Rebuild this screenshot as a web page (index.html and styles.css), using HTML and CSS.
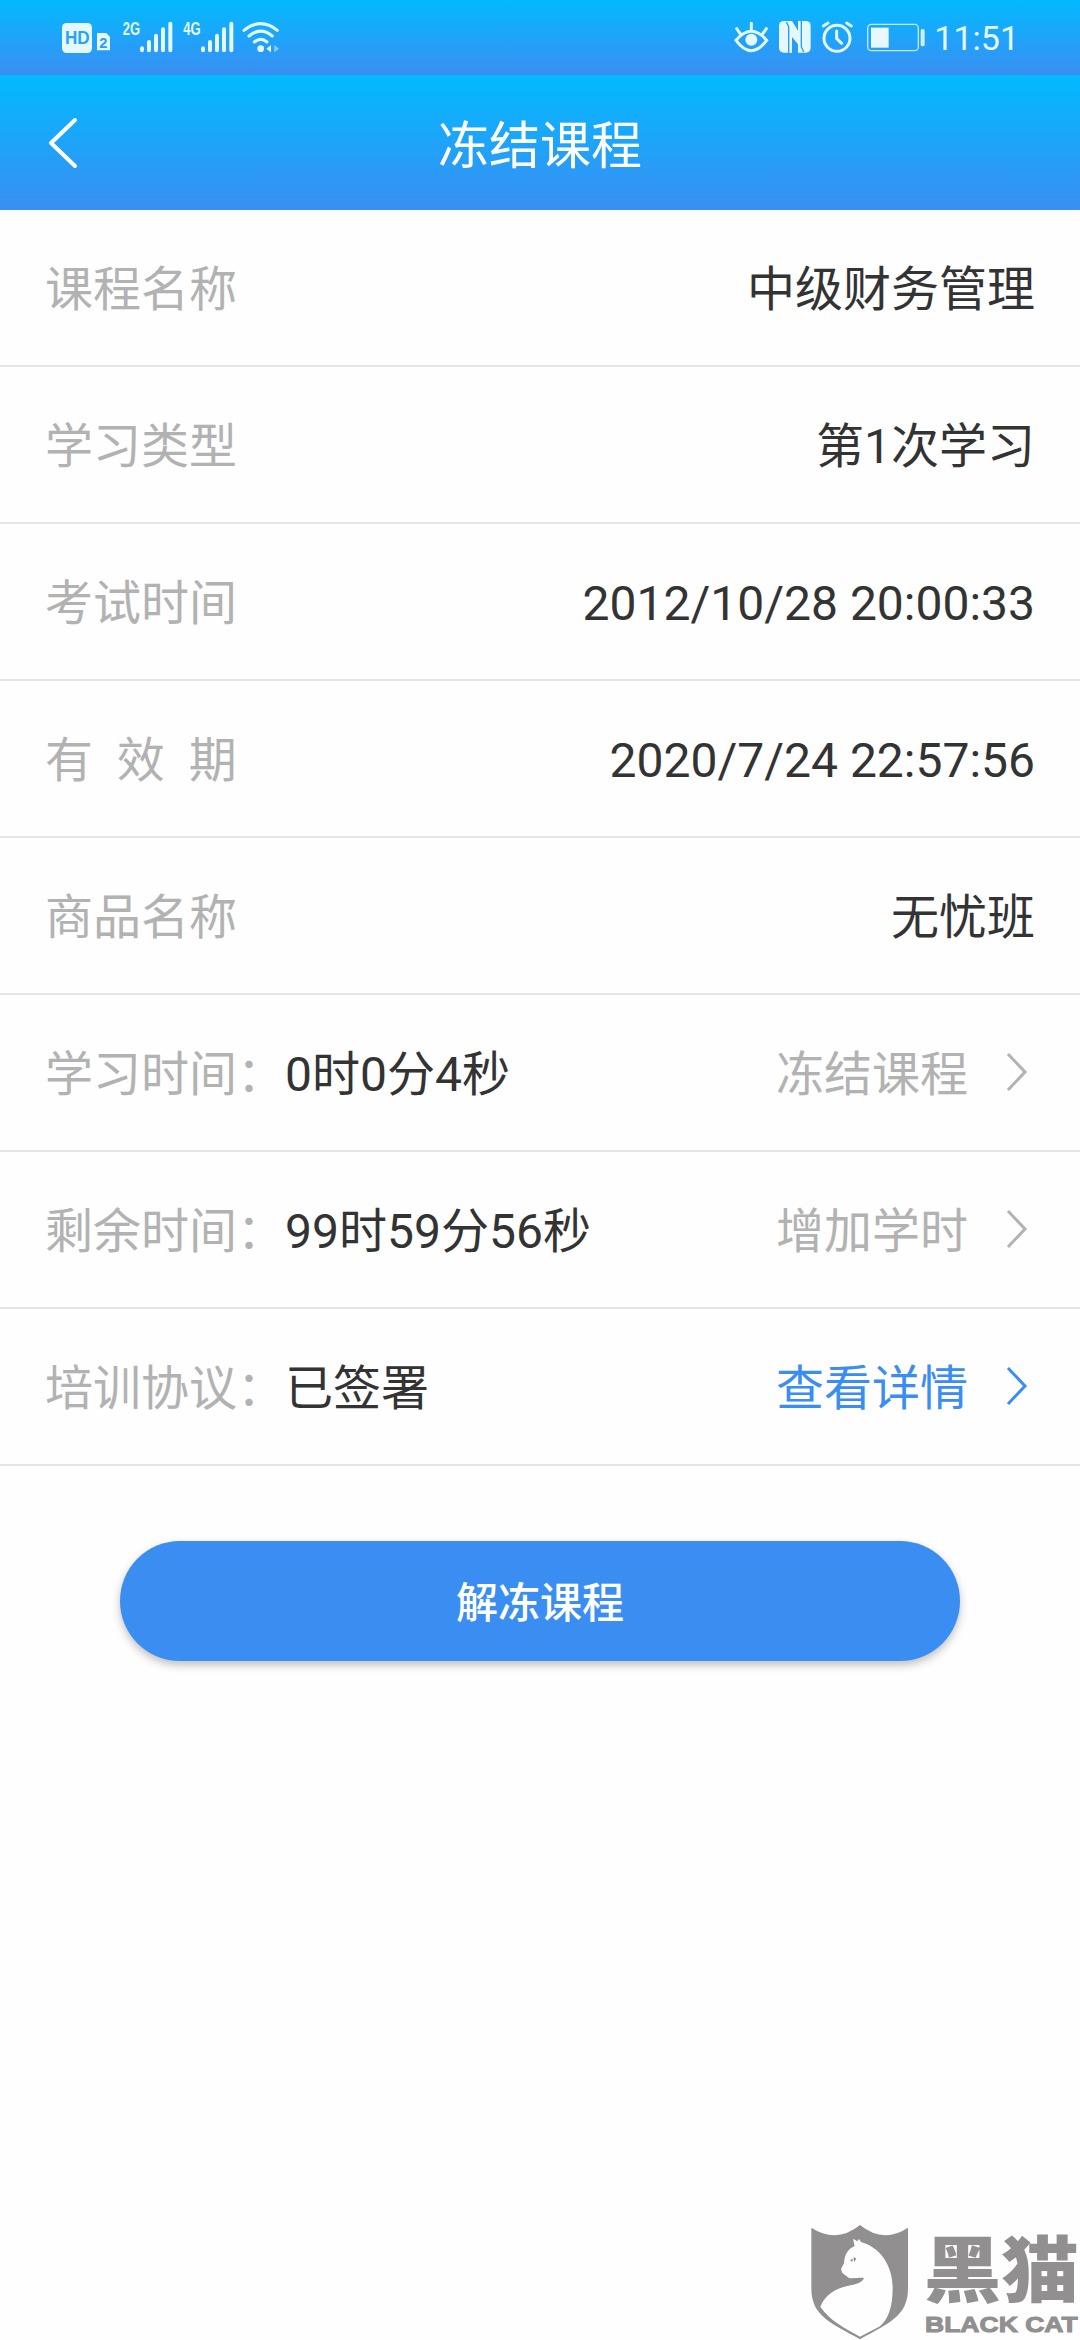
FILE: index.html
```html
<!DOCTYPE html>
<html lang="zh-CN">

<head>
  <meta charset="UTF-8" />
  <title>冻结课程</title>
  <meta name="viewport" content="width=device-width, initial-scale=1.0">
  <link rel="stylesheet" href="styles.css">
</head>

<body>
  <!-- 状态栏 -->
  <div class="status-bar">
    <div class="status-left">
      <svg class="icon" width="50" height="31" viewBox="66 66 150 93">
        <rect x="66" y="69" width="90" height="90" rx="14" fill="#e4f8ff" />
        <text class="hd" x="75" y="133" textLength="74" lengthAdjust="spacingAndGlyphs">HD</text>
        <path d="M171 99h28l11 12v40h-39z" fill="#e4f8ff" />
        <text class="sim" x="178" y="144">2</text>
      </svg>
      <svg class="icon" width="51" height="31" viewBox="246 66 153 93">
        <text class="net" x="248" y="106" textLength="52" lengthAdjust="spacingAndGlyphs">2G</text>
        <path class="bars" d="M306 145v6M327 126v25M348 107v44M369 88v63M391 71v80" />
      </svg>
      <svg class="icon" width="51" height="31" viewBox="429 66 153 93">
        <text class="net" x="430" y="106" textLength="52" lengthAdjust="spacingAndGlyphs">4G</text>
        <path class="bars" d="M489 145v6M510 126v25M531 107v44M552 88v63M574 71v80" />
      </svg>
      <svg class="icon" width="36" height="31" viewBox="612 66 108 93">
        <path class="wifi" d="M612 91q50 -40 100 0M627 108q35 -29 70 0M643 126q19 -16 38 0" />
        <circle cx="662" cy="146" r="10" fill="#e4f8ff" />
        <path d="M693 135v22l-14 -11z" fill="#e4f8ff" />
        <path d="M703 135v22l14 -11z" fill="#8fcbfb" />
      </svg>
    </div>
    <div class="status-right">
      <svg class="icon" width="33" height="31" viewBox="75 66 99 93">
        <path class="line" d="M78 121q46 -54 92 0q-46 62 -92 0zM124 70v18M80 86l10 14M169 86l-10 14" />
        <circle cx="124" cy="119" r="18" fill="#e4f8ff" />
      </svg>
      <svg class="icon" width="32" height="31" viewBox="207 66 96 93">
        <rect x="207" y="63" width="95" height="95" rx="14" fill="#e4f8ff" />
        <path d="M236 158V80L229 66M274 63V140L281 156" fill="none" stroke="#259df8" stroke-width="4" />
        <path d="M246 62h18v30zM264 159h-18v-48l18 22z" fill="#259df8" />
      </svg>
      <svg class="icon" width="32" height="31" viewBox="336 66 96 93">
        <circle class="line" cx="381" cy="115" r="39" />
        <path class="line" d="M380 93v23l15 14M340 78l14 -9M424 78l-14 -9" />
      </svg>
      <svg class="icon battery" width="58" height="31" viewBox="471 66 174 93">
        <rect x="473" y="73" width="152" height="79" rx="11" fill="none" stroke="#bfeaff" stroke-width="4" />
        <rect x="483" y="83" width="53" height="60" fill="#e9f7ff" />
        <rect x="632" y="87" width="12" height="52" rx="5" fill="#cfefff" />
      </svg>
      <span class="clock">11:51</span>
    </div>
  </div>

  <!-- 标题栏 -->
  <header class="header">
    <svg class="back" width="30" height="52" viewBox="0 0 30 52">
      <path d="M27 3L3 26L27 49" />
    </svg>
    <h1>冻结课程</h1>
  </header>

  <ul class="info-list">
    <li><span class="label">课程名称</span><span class="value right">中级财务管理</span></li>
    <li><span class="label">学习类型</span><span class="value right">第1次学习</span></li>
    <li><span class="label">考试时间</span><span class="value right">2012/10/28 20:00:33</span></li>
    <li><span class="label">有  效  期</span><span class="value right">2020/7/24 22:57:56</span></li>
    <li><span class="label">商品名称</span><span class="value right">无忧班</span></li>
    <li>
      <span class="label">学习时间：</span><span class="value">0时0分4秒</span>
      <a class="action">冻结课程<svg class="arrow" width="22" height="40" viewBox="0 0 22 40"><path d="M2 2L19 20L2 38" /></svg></a>
    </li>
    <li>
      <span class="label">剩余时间：</span><span class="value">99时59分56秒</span>
      <a class="action">增加学时<svg class="arrow" width="22" height="40" viewBox="0 0 22 40"><path d="M2 2L19 20L2 38" /></svg></a>
    </li>
    <li>
      <span class="label">培训协议：</span><span class="value">已签署</span>
      <a class="action active">查看详情<svg class="arrow" width="22" height="40" viewBox="0 0 22 40"><path d="M2 2L19 20L2 38" /></svg></a>
    </li>
  </ul>

  <button class="submit">解冻课程</button>

  <!-- 右下角水印 -->
  <svg class="watermark" width="300" height="140" viewBox="0 0 900 420">
    <path d="M94 83Q170 132 240 75Q310 132 384 83V265C384 350 325 370 240 418C155 370 94 350 94 265Z" />
    <path class="cat" d="M219 116L232 124L237 117L243 126C300 142 338 195 338 265C338 320 325 358 300 379L240 410C190 382 148 360 121 320C138 276 180 262 215 255C238 251 248 244 252 234C236 232 222 236 207 234L187 219L183 207L192 190C193 163 205 146 224 138Z" />
    <path d="M210 180l9 -4l-2 10zM220 172l9 3l-6 12z" />
    <text class="cn" x="431" y="287" textLength="466" lengthAdjust="spacingAndGlyphs">黑猫</text>
    <text class="en" x="435" y="396" textLength="458" lengthAdjust="spacingAndGlyphs">BLACK CAT</text>
  </svg>
</body>

</html>
```

FILE: styles.css
```css
body {
  margin: 0;
  min-height: 100vh;
  background: #fefefe;
  color: #333;
  font-family: Roboto, "Noto Sans CJK SC", sans-serif;
  font-size: 48px;
  overflow: hidden;
}

.status-bar {
  height: 75px;
  padding: 0 62px;
  box-sizing: border-box;
  display: flex;
  align-items: center;
  justify-content: space-between;
  background: linear-gradient(#02baff, #3a8ef2);
}

.status-left,
.status-right {
  display: flex;
  align-items: center;
  gap: 10px;
}

.status-right {
  gap: 11px;
}

.icon {
  overflow: visible;
}

.hd {
  font: bold 56px "Liberation Sans", sans-serif;
  fill: #27a3f6;
}

.sim {
  font: bold 44px "Liberation Sans", sans-serif;
  fill: #2b9bf6;
}

.net {
  font: bold 54px "Liberation Sans", sans-serif;
  fill: #e4f8ff;
}

.bars {
  fill: none;
  stroke: #e4f8ff;
  stroke-width: 12;
  stroke-linecap: round;
}

.wifi,
.line {
  fill: none;
  stroke: #e4f8ff;
  stroke-width: 9;
  stroke-linecap: round;
}

.battery {
  margin-left: 2px;
}

.clock {
  margin-right: -1px;
  margin-left: -2px;
  font-size: 34px;
  line-height: 40px;
  color: #e4f8ff;
}

.header {
  height: 135px;
  padding: 0 48px;
  box-sizing: border-box;
  display: flex;
  align-items: center;
  background: linear-gradient(#02baff, #3a8ef2);
}

.header h1 {
  flex: 1;
  margin: 0 30px 0 0;
  padding-bottom: 2px;
  font-size: 51px;
  font-weight: 400;
  color: #fff;
  text-align: center;
}

.back path {
  fill: none;
  stroke: #fff;
  stroke-width: 4;
  stroke-linecap: round;
  stroke-linejoin: round;
}

.info-list {
  list-style: none;
  margin: 0;
  padding: 0;
}

.info-list li {
  height: 157px;
  padding: 5px 45px 0;
  box-sizing: border-box;
  border-bottom: 2px solid #e5e5e5;
  display: flex;
  align-items: center;
  line-height: 70px;
}

.label {
  color: #b2b2b2;
  white-space: pre;
}

.right,
.action {
  margin-left: auto;
}

.action {
  display: flex;
  align-items: center;
  gap: 38px;
  margin-right: 7px;
  color: #b2b2b2;
}

.action.active {
  color: #3a8ef2;
}

.arrow {
  margin-top: -6px;
}

.arrow path {
  fill: none;
  stroke: currentColor;
  stroke-width: 3;
}

.submit {
  display: block;
  width: 840px;
  height: 120px;
  margin: 75px auto 0;
  padding: 0 0 3px;
  border: none;
  border-radius: 60px;
  background: #3a8ef2;
  box-shadow: 0 4px 8px rgba(0, 0, 0, 0.25);
  color: #fff;
  font-family: inherit;
  font-size: 42px;
  font-weight: 500;
}

.watermark {
  position: absolute;
  right: 0;
  bottom: 0;
  fill: #918f90;
}

.watermark .cat {
  fill: #fefefe;
}

.watermark .cn {
  font: 900 216px "Noto Sans CJK SC", sans-serif;
}

.watermark .en {
  font: bold 68px "Liberation Sans", sans-serif;
  stroke: #918f90;
  stroke-width: 3;
}
```
